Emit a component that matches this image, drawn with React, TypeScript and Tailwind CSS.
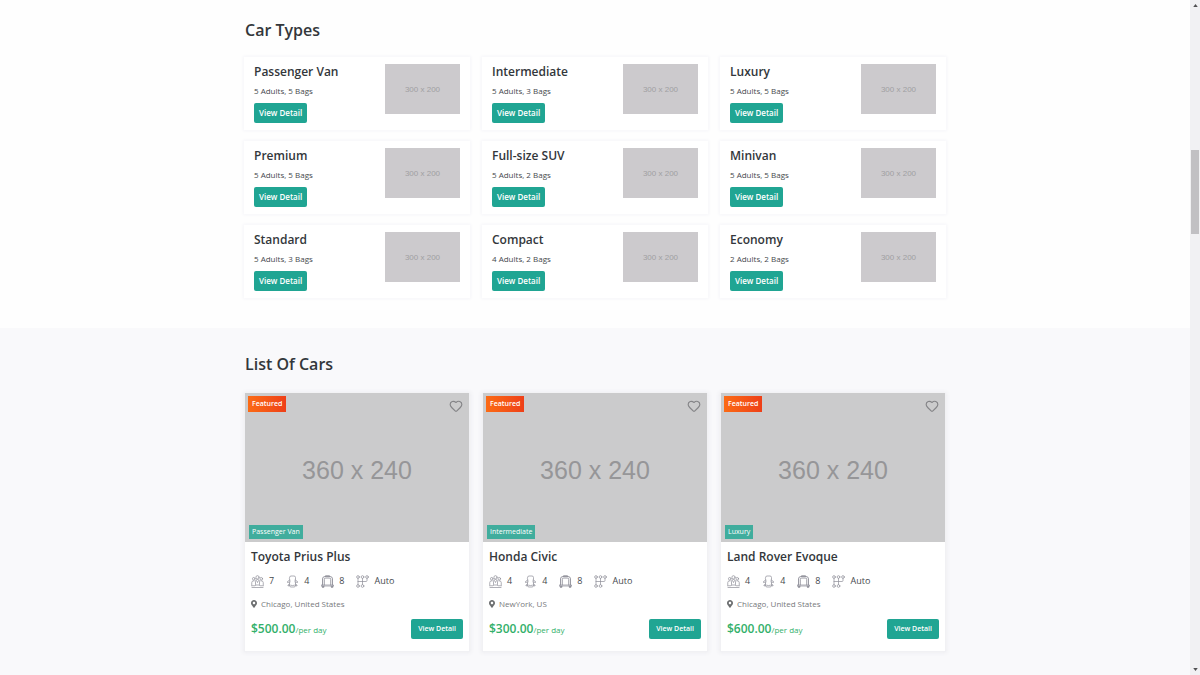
import React from "react";
import { Heart } from "lucide-react";
import { FaMapMarkerAlt } from "react-icons/fa";

type CarType = { name: string; adults: number; bags: number };
type Car = {
  name: string;
  type: string;
  seats: number;
  doors: number;
  bags: number;
  location: string;
  price: string;
};

const carTypes: CarType[] = [
  { name: "Passenger Van", adults: 5, bags: 5 },
  { name: "Intermediate", adults: 5, bags: 3 },
  { name: "Luxury", adults: 5, bags: 5 },
  { name: "Premium", adults: 5, bags: 5 },
  { name: "Full-size SUV", adults: 5, bags: 2 },
  { name: "Minivan", adults: 5, bags: 5 },
  { name: "Standard", adults: 5, bags: 3 },
  { name: "Compact", adults: 4, bags: 2 },
  { name: "Economy", adults: 2, bags: 2 },
];

const cars: Car[] = [
  { name: "Toyota Prius Plus", type: "Passenger Van", seats: 7, doors: 4, bags: 8, location: "Chicago, United States", price: "$500.00" },
  { name: "Honda Civic", type: "Intermediate", seats: 4, doors: 4, bags: 8, location: "NewYork, US", price: "$300.00" },
  { name: "Land Rover Evoque", type: "Luxury", seats: 4, doors: 4, bags: 8, location: "Chicago, United States", price: "$600.00" },
];

function Icon({ children }: { children: React.ReactNode }) {
  return (
    <svg
      viewBox="0 0 26 26"
      className="h-[13px] w-[13px] shrink-0"
      fill="none"
      stroke="#8e8e98"
      strokeWidth="1.4"
      strokeLinecap="round"
      strokeLinejoin="round"
      aria-hidden="true"
    >
      {children}
    </svg>
  );
}

function PeopleIcon() {
  return (
    <Icon>
      <circle cx="13" cy="4.5" r="3.2" />
      <circle cx="5.5" cy="7.5" r="2.6" />
      <circle cx="20.5" cy="7.5" r="2.6" />
      <path d="M9 19v-6a4 4 0 0 1 8 0v6M11.500 12l1.500 3 1.500-3" />
      <path d="M1.500 20v-5a4 4 0 0 1 5-3.500M24.500 20v-5a4 4 0 0 0-5-3.500" />
      <path d="M1 21.500h7l2-1.500h6l2 1.500h7M2 25h22" />
    </Icon>
  );
}

function CarTopIcon() {
  return (
    <Icon>
      <path d="M7 5q0-3 3-3h6q3 0 3 3v3l-1 4 1 4v5q0 3-3 3h-6q-3 0-3-3v-5l1-4-1-4z" />
      <path d="M9 20.500q4 1.500 8 0" />
      <path d="M7.500 10L3 13v2l4.500-1M18.500 10l4.500 3v2l-4.500-1M7 18l-3 2v2l3-1M19 18l3 2v2l-3-1" />
    </Icon>
  );
}

function LuggageIcon() {
  return (
    <Icon>
      <path strokeWidth="1.8" d="M3 20V8q0-5 5-5h10q5 0 5 5v12M6.500 20V9q0-3 3-3h7q3 0 3 3v11M9 3V1.500h8V3" />
      <path d="M1 20h24v2H1z" />
      <circle cx="4" cy="23.500" r="1.700" fill="#8e8e98" />
      <circle cx="22" cy="23.500" r="1.700" fill="#8e8e98" />
    </Icon>
  );
}

function GearIcon() {
  return (
    <Icon>
      <circle cx="4" cy="4" r="2.700" />
      <circle cx="13" cy="4" r="2.700" />
      <circle cx="22" cy="4" r="2.700" />
      <circle cx="4" cy="22" r="2.700" />
      <circle cx="13" cy="22" r="2.700" />
      <path d="M4 7v12M13 7v12M22 7v4q0 2-2 2H4" />
    </Icon>
  );
}

function Spec({ icon, label, value }: { icon: React.ReactNode; label: string; value: string | number }) {
  return (
    <li className="flex items-center gap-[5px]" title={label}>
      {icon}
      {value}
    </li>
  );
}

function TypeCard({ item }: { item: CarType }) {
  return (
    <article className="flex items-start justify-between bg-white px-[10px] py-[7px] shadow-[0_0_3px_1px_#f5f5f9]">
      <div>
        <h3 className="text-[12px] leading-4 font-semibold text-[#33373b]">{item.name}</h3>
        <p className="mt-1 text-[8px] leading-[14px] text-[#45494d]">
          {item.adults} Adults, {item.bags} Bags
        </p>
        <button type="button" className="mt-[5px] block h-5 rounded-xs bg-[#20a593] px-[5px] text-[8px] leading-5 font-semibold text-white">
          View Detail
        </button>
      </div>
      <div className="flex h-[50px] w-[75px] items-center justify-center bg-[#cccacd] pt-px font-['Liberation_Sans',Arial,sans-serif] text-[8px] text-[#a09fa2]">
        300 x 200
      </div>
    </article>
  );
}

function CarCard({ car }: { car: Car }) {
  return (
    <article className="border border-t-0 border-[#f1f1f4] bg-white shadow-[0_0_4px_1px_#eeeef2]">
      <div className="relative flex h-[149px] items-center justify-center bg-[#cbcbcc] pt-[6px] font-['Liberation_Sans',Arial,sans-serif] text-[25px] text-[#969698]">
        360 x 240
        <span className="absolute top-[3px] left-[3px] bg-linear-to-r from-[#fb6a14] to-[#ee3f18] px-1 font-['Open_Sans','Noto_Sans',sans-serif] text-[7px] leading-4 font-semibold text-white">
          Featured
        </span>
        <button type="button" aria-label={`Save ${car.name}`} className="absolute top-[6px] right-[6px]">
          <Heart className="h-[14px] w-[14px] text-[#858588]" strokeWidth={2} />
        </button>
        <span className="absolute bottom-[3px] left-1 bg-[#40ad9d] px-[3px] font-['Open_Sans','Noto_Sans',sans-serif] text-[7px] leading-[14px] text-white">
          {car.type}
        </span>
      </div>
      <div className="px-[6px] pt-[7px] pb-3">
        <h3 className="text-[12px] leading-4 font-semibold text-[#33373b]">{car.name}</h3>
        <ul className="mt-2 flex h-4 items-center gap-3 text-[9px] text-[#45494d]">
          <Spec icon={<PeopleIcon />} label="Seats" value={car.seats} />
          <Spec icon={<CarTopIcon />} label="Doors" value={car.doors} />
          <Spec icon={<LuggageIcon />} label="Bags" value={car.bags} />
          <Spec icon={<GearIcon />} label="Transmission" value="Auto" />
        </ul>
        <p className="mt-2 flex items-center gap-1 text-[8px] leading-[14px] text-[#77797c]">
          <FaMapMarkerAlt className="h-2 w-[6px] text-[#6c6e70]" />
          {car.location}
        </p>
        <div className="mt-2 flex h-5 items-center justify-between">
          <p className="text-[12px] leading-5 font-semibold text-[#32b06a]">
            {car.price}
            <span className="text-[8px] leading-none font-normal">/per day</span>
          </p>
          <button type="button" className="h-5 rounded-xs bg-[#20a593] px-[7px] text-[7px] font-semibold text-white">
            View Detail
          </button>
        </div>
      </div>
    </article>
  );
}

export default function App() {
  return (
    <div className="flex min-h-screen bg-[#f9f9fb] font-['Open_Sans','Noto_Sans',sans-serif]">
      <main className="min-w-0 flex-1">
        <section className="bg-[#fefefe] px-4 pt-4 pb-[30px]">
          <div className="mx-auto w-full max-w-[702px]">
            <h2 className="px-px text-[16px] leading-7 font-semibold text-[#33373b]">Car Types</h2>
            <div className="mt-[13px] grid grid-cols-3 gap-x-3 gap-y-[11px]">
              {carTypes.map((item) => (
                <TypeCard key={item.name} item={item} />
              ))}
            </div>
          </div>
        </section>
        <section className="px-4 pt-[22px] pb-4">
          <div className="mx-auto w-full max-w-[702px]">
            <h2 className="px-px text-[16px] leading-7 font-semibold text-[#33373b]">List Of Cars</h2>
            <div className="mt-[15px] grid grid-cols-3 gap-x-3">
              {cars.map((car) => (
                <CarCard key={car.name} car={car} />
              ))}
            </div>
          </div>
        </section>
      </main>
      <aside aria-hidden="true" className="sticky top-0 flex h-screen w-[10px] shrink-0 flex-col items-center justify-between bg-[#f1f1f3] py-1">
        <svg viewBox="0 0 6 4" className="h-[3px] w-[5px]" fill="#505052">
          <path d="M3 0l3 4H0z" />
        </svg>
        <div className="flex w-2 flex-1 flex-col">
          <div className="grow-[143]" />
          <div className="grow-[84] bg-[#c1c0c3]" />
          <div className="grow-[434]" />
        </div>
        <svg viewBox="0 0 6 4" className="h-[3px] w-[5px]" fill="#505052">
          <path d="M3 4l3-4H0z" />
        </svg>
      </aside>
    </div>
  );
}
